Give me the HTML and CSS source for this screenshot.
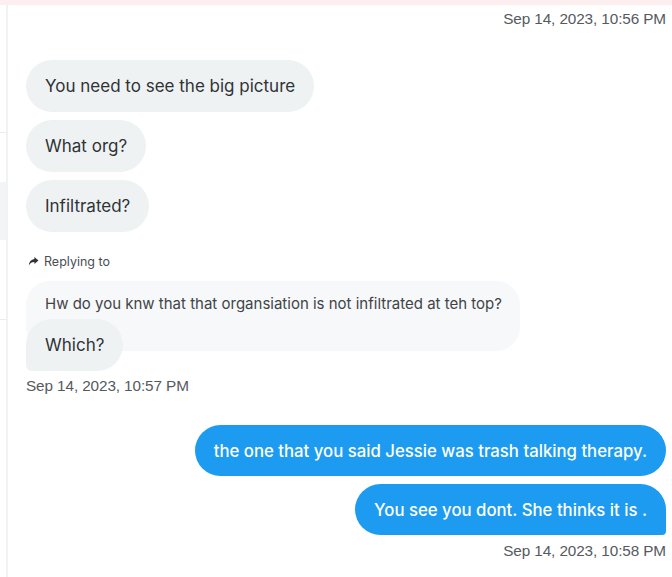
FILE: index.html
```html
<!DOCTYPE html>
<html lang="en">
<head>
<meta charset="utf-8">
<title>Conversation</title>
<link rel="stylesheet" href="styles.css">
</head>
<body>
<div class="top-strip"></div>
<div class="layout">
  <aside class="side">
    <div class="side-a"></div>
    <div class="side-b"></div>
    <div class="side-c"></div>
    <div class="side-d"></div>
    <div class="side-e"></div>
  </aside>
  <main class="chat">
    <div class="stamp stamp-right">Sep 14, 2023, 10:56 PM</div>

    <div class="group group-in">
      <div class="bubble in">You need to see the big picture</div>
      <div class="bubble in">What org?</div>
      <div class="bubble in">Infiltrated?</div>
    </div>

    <div class="reply">
      <div class="reply-label">
        <svg class="reply-icon" viewBox="0 0 12 12" width="11" height="11" aria-hidden="true">
          <path d="M7 1.2 L11.4 5 L7 8.8 V6.6 C4.3 6.5 2.4 7.6 0.8 10.4 C1.2 6.4 3.2 3.8 7 3.4 Z" fill="#333"/>
        </svg>
        <span>Replying to</span>
      </div>
      <div class="quote">Hw do you knw that that organsiation is not infiltrated at teh top?</div>
      <div class="bubble in last-in over">Which?</div>
    </div>
    <div class="stamp">Sep 14, 2023, 10:57 PM</div>

    <div class="group group-out">
      <div class="bubble out">the one that you said Jessie was trash talking therapy.</div>
      <div class="bubble out last-out">You see you dont. She thinks it is .</div>
    </div>
    <div class="stamp stamp-right">Sep 14, 2023, 10:58 PM</div>
  </main>
</div>
</body>
</html>
```

FILE: styles.css
```css
* { box-sizing: border-box; }

html, body {
  margin: 0;
  padding: 0;
  background: #ffffff;
}

body {
  width: 672px;
  height: 577px;
  overflow: hidden;
  font-family: "Inter", "Open Sans", sans-serif;
}

.top-strip {
  height: 5px;
  background: #fdefef;
}

.layout {
  display: flex;
  height: 572px;
}

.side {
  width: 8px;
  flex: none;
  border-right: 2px solid #f1f2f3;
  display: flex;
  flex-direction: column;
}

.side-a { height: 128px; border-bottom: 1px solid #ececec; }
.side-b { height: 49px; }
.side-c { height: 58px; background: #f3f4f5; }
.side-d { height: 80px; border-bottom: 1px solid #ececec; }
.side-e { flex: 1; }

.chat {
  flex: 1;
  display: flex;
  flex-direction: column;
  padding: 4px 6px 0 18px;
}

.stamp {
  font-family: "Liberation Sans", Arial, sans-serif;
  font-size: 15.3px;
  line-height: 20px;
  color: #555a5e;
  letter-spacing: -0.1px;
}

.stamp-right { text-align: right; }

.group {
  display: flex;
  flex-direction: column;
  gap: 8px;
}

.group-in {
  align-items: flex-start;
  margin-top: 31px;
}

.group-out {
  align-items: flex-end;
  margin-top: 29px;
  gap: 8px;
}

.bubble {
  font-size: 17px;
  line-height: 20px;
  padding: 16px 19px;
  border-radius: 26px;
  white-space: nowrap;
}

.in {
  background: #eff2f3;
  color: #2f3336;
}

.out {
  background: #1d9bf0;
  color: #ffffff;
  font-weight: 500;
  font-size: 16.75px;
  padding: 16px 19px 15px;
}

.last-out { border-bottom-right-radius: 4px; }
.last-in { border-bottom-left-radius: 6px; }

.reply {
  display: flex;
  flex-direction: column;
  align-items: flex-start;
  margin-top: 21px;
}

.reply-label {
  display: flex;
  align-items: center;
  gap: 5px;
  height: 16px;
  padding-left: 2px;
  font-size: 12.5px;
  color: #4a4f53;
}

.reply-icon { flex: none; }

.quote {
  margin-top: 12px;
  background: #f7f8f9;
  color: #3f4448;
  font-size: 15px;
  line-height: 20px;
  padding: 13px 18px 37px 19px;
  border-radius: 24px;
  white-space: nowrap;
}

.over {
  margin-top: -32px;
}

.reply + .stamp {
  margin-top: 5px;
}

.group-out + .stamp {
  margin-top: 6px;
}
```
